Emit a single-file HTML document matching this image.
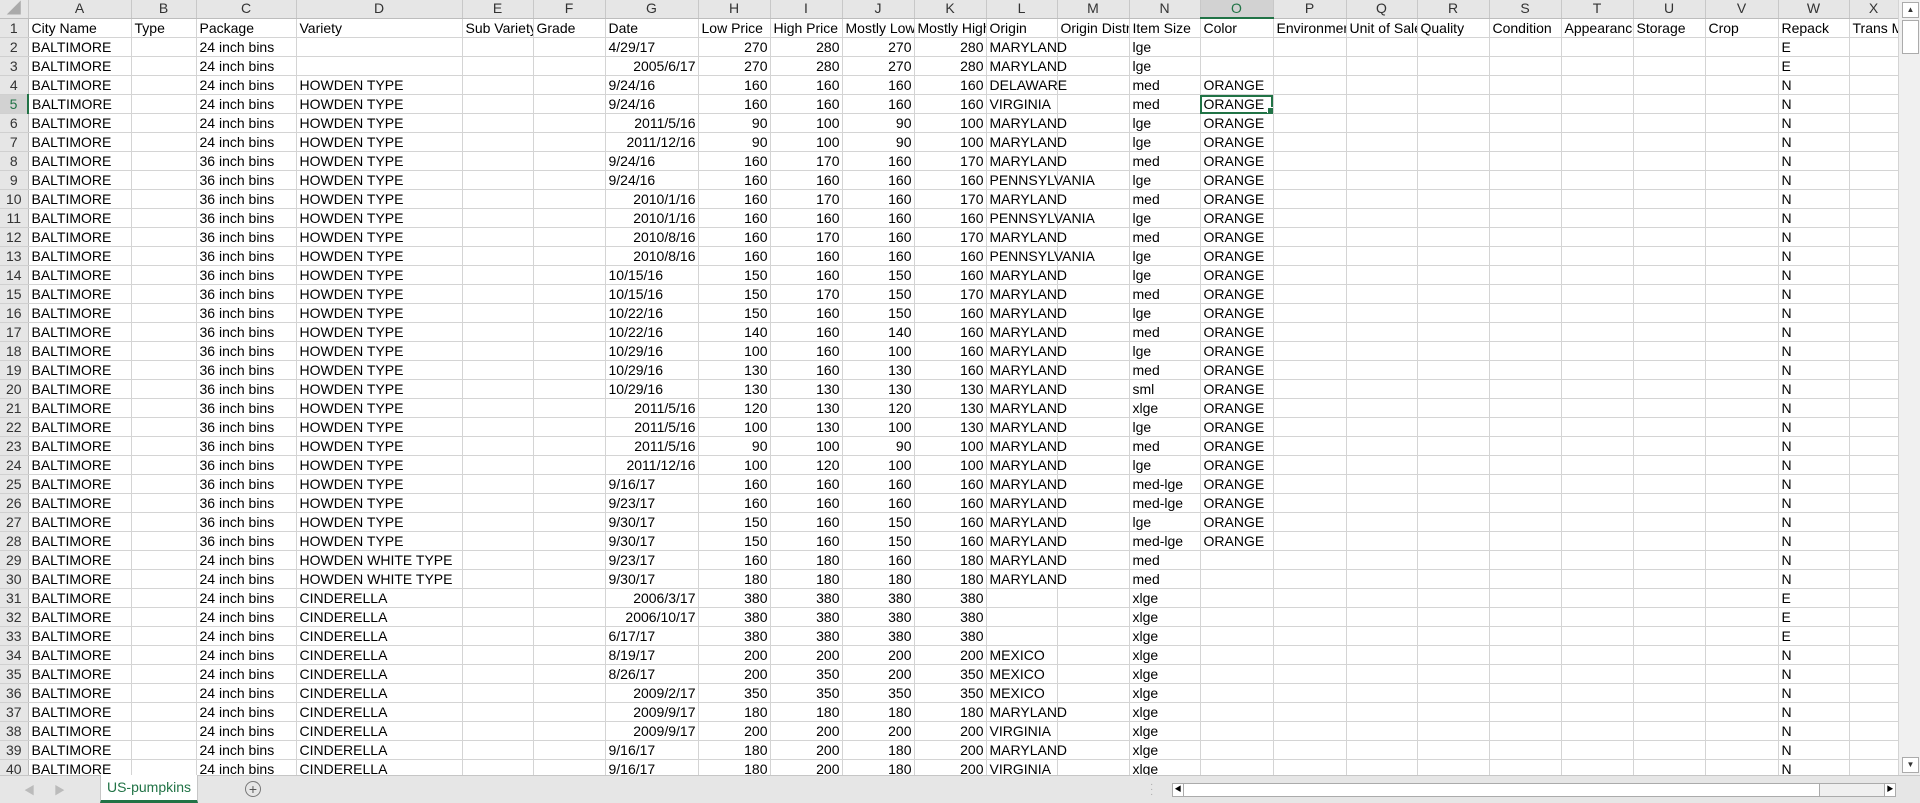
<!DOCTYPE html>
<html><head><meta charset="utf-8">
<style>
html,body{margin:0;padding:0;width:1920px;height:803px;overflow:hidden;background:#fff;font-family:"Liberation Sans","Noto Sans CJK SC",sans-serif;}
#grid{position:absolute;left:0;top:0;width:1898px;height:775px;overflow:hidden;}
table{border-collapse:collapse;table-layout:fixed;width:1898px;font-size:14px;}
td,th{height:18px;padding:0 2px 0 3px;white-space:nowrap;overflow:hidden;border-right:1px solid #d4d4d4;border-bottom:1px solid #d4d4d4;line-height:18px;color:#000;font-weight:normal;text-align:left;}
tbody td:nth-child(13){overflow:visible;}
thead th{background:#e6e6e6;color:#333;text-align:center;height:17px;line-height:17px;border-right:1px solid #c8c8c8;border-bottom:1px solid #bdbdbd;font-size:14px;padding:0}
tbody th{background:#e6e6e6;color:#333;text-align:center;padding:0;border-right:1px solid #bdbdbd;border-bottom:1px solid #d0d0d0;}
td.r{text-align:right;}
thead th.sel{background:#d2d2d2;color:#217346;border-bottom:2px solid #217346}
tbody th.sel{background:#d2d2d2;color:#217346;border-right:2px solid #217346}
td.cur{outline:2px solid #217346;outline-offset:-2px;position:relative}
td.cur:after{content:"";position:absolute;right:-1px;bottom:-1px;width:5px;height:5px;background:#217346;border:1px solid #fff}
#vs{position:absolute;left:1898px;top:0;width:22px;height:775px;background:#f0f0f0;border-left:1px solid #d4d4d4;box-sizing:border-box}
#bar{position:absolute;left:0;top:775px;width:1920px;height:28px;background:#e6e6e6;border-top:1px solid #c6c6c6;box-sizing:border-box}
</style></head><body>
<div id="grid"><table>
<colgroup><col style="width:28px"><col style="width:103px"><col style="width:65px"><col style="width:100px"><col style="width:166px"><col style="width:71px"><col style="width:72px"><col style="width:93px"><col style="width:72px"><col style="width:72px"><col style="width:72px"><col style="width:72px"><col style="width:71px"><col style="width:72px"><col style="width:71px"><col style="width:73px"><col style="width:73px"><col style="width:71px"><col style="width:72px"><col style="width:72px"><col style="width:72px"><col style="width:72px"><col style="width:73px"><col style="width:71px"><col style="width:49px"></colgroup>
<thead><tr><th style="color:#aaa">◢</th><th>A</th><th>B</th><th>C</th><th>D</th><th>E</th><th>F</th><th>G</th><th>H</th><th>I</th><th>J</th><th>K</th><th>L</th><th>M</th><th>N</th><th class="sel">O</th><th>P</th><th>Q</th><th>R</th><th>S</th><th>T</th><th>U</th><th>V</th><th>W</th><th>X</th></tr></thead>
<tbody>
<tr><th>1</th><td>City Name</td><td>Type</td><td>Package</td><td>Variety</td><td>Sub Variety</td><td>Grade</td><td>Date</td><td>Low Price</td><td>High Price</td><td>Mostly Low</td><td>Mostly High</td><td>Origin</td><td>Origin District</td><td>Item Size</td><td>Color</td><td>Environment</td><td>Unit of Sale</td><td>Quality</td><td>Condition</td><td>Appearance</td><td>Storage</td><td>Crop</td><td>Repack</td><td>Trans Mode</td></tr>
<tr><th>2</th><td>BALTIMORE</td><td></td><td>24 inch bins</td><td></td><td></td><td></td><td>4/29/17</td><td class="r">270</td><td class="r">280</td><td class="r">270</td><td class="r">280</td><td>MARYLAND</td><td></td><td>lge</td><td></td><td></td><td></td><td></td><td></td><td></td><td></td><td></td><td>E</td><td></td></tr>
<tr><th>3</th><td>BALTIMORE</td><td></td><td>24 inch bins</td><td></td><td></td><td></td><td class="r">2005/6/17</td><td class="r">270</td><td class="r">280</td><td class="r">270</td><td class="r">280</td><td>MARYLAND</td><td></td><td>lge</td><td></td><td></td><td></td><td></td><td></td><td></td><td></td><td></td><td>E</td><td></td></tr>
<tr><th>4</th><td>BALTIMORE</td><td></td><td>24 inch bins</td><td>HOWDEN TYPE</td><td></td><td></td><td>9/24/16</td><td class="r">160</td><td class="r">160</td><td class="r">160</td><td class="r">160</td><td>DELAWARE</td><td></td><td>med</td><td>ORANGE</td><td></td><td></td><td></td><td></td><td></td><td></td><td></td><td>N</td><td></td></tr>
<tr><th class="sel">5</th><td>BALTIMORE</td><td></td><td>24 inch bins</td><td>HOWDEN TYPE</td><td></td><td></td><td>9/24/16</td><td class="r">160</td><td class="r">160</td><td class="r">160</td><td class="r">160</td><td>VIRGINIA</td><td></td><td>med</td><td class="cur">ORANGE</td><td></td><td></td><td></td><td></td><td></td><td></td><td></td><td>N</td><td></td></tr>
<tr><th>6</th><td>BALTIMORE</td><td></td><td>24 inch bins</td><td>HOWDEN TYPE</td><td></td><td></td><td class="r">2011/5/16</td><td class="r">90</td><td class="r">100</td><td class="r">90</td><td class="r">100</td><td>MARYLAND</td><td></td><td>lge</td><td>ORANGE</td><td></td><td></td><td></td><td></td><td></td><td></td><td></td><td>N</td><td></td></tr>
<tr><th>7</th><td>BALTIMORE</td><td></td><td>24 inch bins</td><td>HOWDEN TYPE</td><td></td><td></td><td class="r">2011/12/16</td><td class="r">90</td><td class="r">100</td><td class="r">90</td><td class="r">100</td><td>MARYLAND</td><td></td><td>lge</td><td>ORANGE</td><td></td><td></td><td></td><td></td><td></td><td></td><td></td><td>N</td><td></td></tr>
<tr><th>8</th><td>BALTIMORE</td><td></td><td>36 inch bins</td><td>HOWDEN TYPE</td><td></td><td></td><td>9/24/16</td><td class="r">160</td><td class="r">170</td><td class="r">160</td><td class="r">170</td><td>MARYLAND</td><td></td><td>med</td><td>ORANGE</td><td></td><td></td><td></td><td></td><td></td><td></td><td></td><td>N</td><td></td></tr>
<tr><th>9</th><td>BALTIMORE</td><td></td><td>36 inch bins</td><td>HOWDEN TYPE</td><td></td><td></td><td>9/24/16</td><td class="r">160</td><td class="r">160</td><td class="r">160</td><td class="r">160</td><td>PENNSYLVANIA</td><td></td><td>lge</td><td>ORANGE</td><td></td><td></td><td></td><td></td><td></td><td></td><td></td><td>N</td><td></td></tr>
<tr><th>10</th><td>BALTIMORE</td><td></td><td>36 inch bins</td><td>HOWDEN TYPE</td><td></td><td></td><td class="r">2010/1/16</td><td class="r">160</td><td class="r">170</td><td class="r">160</td><td class="r">170</td><td>MARYLAND</td><td></td><td>med</td><td>ORANGE</td><td></td><td></td><td></td><td></td><td></td><td></td><td></td><td>N</td><td></td></tr>
<tr><th>11</th><td>BALTIMORE</td><td></td><td>36 inch bins</td><td>HOWDEN TYPE</td><td></td><td></td><td class="r">2010/1/16</td><td class="r">160</td><td class="r">160</td><td class="r">160</td><td class="r">160</td><td>PENNSYLVANIA</td><td></td><td>lge</td><td>ORANGE</td><td></td><td></td><td></td><td></td><td></td><td></td><td></td><td>N</td><td></td></tr>
<tr><th>12</th><td>BALTIMORE</td><td></td><td>36 inch bins</td><td>HOWDEN TYPE</td><td></td><td></td><td class="r">2010/8/16</td><td class="r">160</td><td class="r">170</td><td class="r">160</td><td class="r">170</td><td>MARYLAND</td><td></td><td>med</td><td>ORANGE</td><td></td><td></td><td></td><td></td><td></td><td></td><td></td><td>N</td><td></td></tr>
<tr><th>13</th><td>BALTIMORE</td><td></td><td>36 inch bins</td><td>HOWDEN TYPE</td><td></td><td></td><td class="r">2010/8/16</td><td class="r">160</td><td class="r">160</td><td class="r">160</td><td class="r">160</td><td>PENNSYLVANIA</td><td></td><td>lge</td><td>ORANGE</td><td></td><td></td><td></td><td></td><td></td><td></td><td></td><td>N</td><td></td></tr>
<tr><th>14</th><td>BALTIMORE</td><td></td><td>36 inch bins</td><td>HOWDEN TYPE</td><td></td><td></td><td>10/15/16</td><td class="r">150</td><td class="r">160</td><td class="r">150</td><td class="r">160</td><td>MARYLAND</td><td></td><td>lge</td><td>ORANGE</td><td></td><td></td><td></td><td></td><td></td><td></td><td></td><td>N</td><td></td></tr>
<tr><th>15</th><td>BALTIMORE</td><td></td><td>36 inch bins</td><td>HOWDEN TYPE</td><td></td><td></td><td>10/15/16</td><td class="r">150</td><td class="r">170</td><td class="r">150</td><td class="r">170</td><td>MARYLAND</td><td></td><td>med</td><td>ORANGE</td><td></td><td></td><td></td><td></td><td></td><td></td><td></td><td>N</td><td></td></tr>
<tr><th>16</th><td>BALTIMORE</td><td></td><td>36 inch bins</td><td>HOWDEN TYPE</td><td></td><td></td><td>10/22/16</td><td class="r">150</td><td class="r">160</td><td class="r">150</td><td class="r">160</td><td>MARYLAND</td><td></td><td>lge</td><td>ORANGE</td><td></td><td></td><td></td><td></td><td></td><td></td><td></td><td>N</td><td></td></tr>
<tr><th>17</th><td>BALTIMORE</td><td></td><td>36 inch bins</td><td>HOWDEN TYPE</td><td></td><td></td><td>10/22/16</td><td class="r">140</td><td class="r">160</td><td class="r">140</td><td class="r">160</td><td>MARYLAND</td><td></td><td>med</td><td>ORANGE</td><td></td><td></td><td></td><td></td><td></td><td></td><td></td><td>N</td><td></td></tr>
<tr><th>18</th><td>BALTIMORE</td><td></td><td>36 inch bins</td><td>HOWDEN TYPE</td><td></td><td></td><td>10/29/16</td><td class="r">100</td><td class="r">160</td><td class="r">100</td><td class="r">160</td><td>MARYLAND</td><td></td><td>lge</td><td>ORANGE</td><td></td><td></td><td></td><td></td><td></td><td></td><td></td><td>N</td><td></td></tr>
<tr><th>19</th><td>BALTIMORE</td><td></td><td>36 inch bins</td><td>HOWDEN TYPE</td><td></td><td></td><td>10/29/16</td><td class="r">130</td><td class="r">160</td><td class="r">130</td><td class="r">160</td><td>MARYLAND</td><td></td><td>med</td><td>ORANGE</td><td></td><td></td><td></td><td></td><td></td><td></td><td></td><td>N</td><td></td></tr>
<tr><th>20</th><td>BALTIMORE</td><td></td><td>36 inch bins</td><td>HOWDEN TYPE</td><td></td><td></td><td>10/29/16</td><td class="r">130</td><td class="r">130</td><td class="r">130</td><td class="r">130</td><td>MARYLAND</td><td></td><td>sml</td><td>ORANGE</td><td></td><td></td><td></td><td></td><td></td><td></td><td></td><td>N</td><td></td></tr>
<tr><th>21</th><td>BALTIMORE</td><td></td><td>36 inch bins</td><td>HOWDEN TYPE</td><td></td><td></td><td class="r">2011/5/16</td><td class="r">120</td><td class="r">130</td><td class="r">120</td><td class="r">130</td><td>MARYLAND</td><td></td><td>xlge</td><td>ORANGE</td><td></td><td></td><td></td><td></td><td></td><td></td><td></td><td>N</td><td></td></tr>
<tr><th>22</th><td>BALTIMORE</td><td></td><td>36 inch bins</td><td>HOWDEN TYPE</td><td></td><td></td><td class="r">2011/5/16</td><td class="r">100</td><td class="r">130</td><td class="r">100</td><td class="r">130</td><td>MARYLAND</td><td></td><td>lge</td><td>ORANGE</td><td></td><td></td><td></td><td></td><td></td><td></td><td></td><td>N</td><td></td></tr>
<tr><th>23</th><td>BALTIMORE</td><td></td><td>36 inch bins</td><td>HOWDEN TYPE</td><td></td><td></td><td class="r">2011/5/16</td><td class="r">90</td><td class="r">100</td><td class="r">90</td><td class="r">100</td><td>MARYLAND</td><td></td><td>med</td><td>ORANGE</td><td></td><td></td><td></td><td></td><td></td><td></td><td></td><td>N</td><td></td></tr>
<tr><th>24</th><td>BALTIMORE</td><td></td><td>36 inch bins</td><td>HOWDEN TYPE</td><td></td><td></td><td class="r">2011/12/16</td><td class="r">100</td><td class="r">120</td><td class="r">100</td><td class="r">100</td><td>MARYLAND</td><td></td><td>lge</td><td>ORANGE</td><td></td><td></td><td></td><td></td><td></td><td></td><td></td><td>N</td><td></td></tr>
<tr><th>25</th><td>BALTIMORE</td><td></td><td>36 inch bins</td><td>HOWDEN TYPE</td><td></td><td></td><td>9/16/17</td><td class="r">160</td><td class="r">160</td><td class="r">160</td><td class="r">160</td><td>MARYLAND</td><td></td><td>med-lge</td><td>ORANGE</td><td></td><td></td><td></td><td></td><td></td><td></td><td></td><td>N</td><td></td></tr>
<tr><th>26</th><td>BALTIMORE</td><td></td><td>36 inch bins</td><td>HOWDEN TYPE</td><td></td><td></td><td>9/23/17</td><td class="r">160</td><td class="r">160</td><td class="r">160</td><td class="r">160</td><td>MARYLAND</td><td></td><td>med-lge</td><td>ORANGE</td><td></td><td></td><td></td><td></td><td></td><td></td><td></td><td>N</td><td></td></tr>
<tr><th>27</th><td>BALTIMORE</td><td></td><td>36 inch bins</td><td>HOWDEN TYPE</td><td></td><td></td><td>9/30/17</td><td class="r">150</td><td class="r">160</td><td class="r">150</td><td class="r">160</td><td>MARYLAND</td><td></td><td>lge</td><td>ORANGE</td><td></td><td></td><td></td><td></td><td></td><td></td><td></td><td>N</td><td></td></tr>
<tr><th>28</th><td>BALTIMORE</td><td></td><td>36 inch bins</td><td>HOWDEN TYPE</td><td></td><td></td><td>9/30/17</td><td class="r">150</td><td class="r">160</td><td class="r">150</td><td class="r">160</td><td>MARYLAND</td><td></td><td>med-lge</td><td>ORANGE</td><td></td><td></td><td></td><td></td><td></td><td></td><td></td><td>N</td><td></td></tr>
<tr><th>29</th><td>BALTIMORE</td><td></td><td>24 inch bins</td><td>HOWDEN WHITE TYPE</td><td></td><td></td><td>9/23/17</td><td class="r">160</td><td class="r">180</td><td class="r">160</td><td class="r">180</td><td>MARYLAND</td><td></td><td>med</td><td></td><td></td><td></td><td></td><td></td><td></td><td></td><td></td><td>N</td><td></td></tr>
<tr><th>30</th><td>BALTIMORE</td><td></td><td>24 inch bins</td><td>HOWDEN WHITE TYPE</td><td></td><td></td><td>9/30/17</td><td class="r">180</td><td class="r">180</td><td class="r">180</td><td class="r">180</td><td>MARYLAND</td><td></td><td>med</td><td></td><td></td><td></td><td></td><td></td><td></td><td></td><td></td><td>N</td><td></td></tr>
<tr><th>31</th><td>BALTIMORE</td><td></td><td>24 inch bins</td><td>CINDERELLA</td><td></td><td></td><td class="r">2006/3/17</td><td class="r">380</td><td class="r">380</td><td class="r">380</td><td class="r">380</td><td></td><td></td><td>xlge</td><td></td><td></td><td></td><td></td><td></td><td></td><td></td><td></td><td>E</td><td></td></tr>
<tr><th>32</th><td>BALTIMORE</td><td></td><td>24 inch bins</td><td>CINDERELLA</td><td></td><td></td><td class="r">2006/10/17</td><td class="r">380</td><td class="r">380</td><td class="r">380</td><td class="r">380</td><td></td><td></td><td>xlge</td><td></td><td></td><td></td><td></td><td></td><td></td><td></td><td></td><td>E</td><td></td></tr>
<tr><th>33</th><td>BALTIMORE</td><td></td><td>24 inch bins</td><td>CINDERELLA</td><td></td><td></td><td>6/17/17</td><td class="r">380</td><td class="r">380</td><td class="r">380</td><td class="r">380</td><td></td><td></td><td>xlge</td><td></td><td></td><td></td><td></td><td></td><td></td><td></td><td></td><td>E</td><td></td></tr>
<tr><th>34</th><td>BALTIMORE</td><td></td><td>24 inch bins</td><td>CINDERELLA</td><td></td><td></td><td>8/19/17</td><td class="r">200</td><td class="r">200</td><td class="r">200</td><td class="r">200</td><td>MEXICO</td><td></td><td>xlge</td><td></td><td></td><td></td><td></td><td></td><td></td><td></td><td></td><td>N</td><td></td></tr>
<tr><th>35</th><td>BALTIMORE</td><td></td><td>24 inch bins</td><td>CINDERELLA</td><td></td><td></td><td>8/26/17</td><td class="r">200</td><td class="r">350</td><td class="r">200</td><td class="r">350</td><td>MEXICO</td><td></td><td>xlge</td><td></td><td></td><td></td><td></td><td></td><td></td><td></td><td></td><td>N</td><td></td></tr>
<tr><th>36</th><td>BALTIMORE</td><td></td><td>24 inch bins</td><td>CINDERELLA</td><td></td><td></td><td class="r">2009/2/17</td><td class="r">350</td><td class="r">350</td><td class="r">350</td><td class="r">350</td><td>MEXICO</td><td></td><td>xlge</td><td></td><td></td><td></td><td></td><td></td><td></td><td></td><td></td><td>N</td><td></td></tr>
<tr><th>37</th><td>BALTIMORE</td><td></td><td>24 inch bins</td><td>CINDERELLA</td><td></td><td></td><td class="r">2009/9/17</td><td class="r">180</td><td class="r">180</td><td class="r">180</td><td class="r">180</td><td>MARYLAND</td><td></td><td>xlge</td><td></td><td></td><td></td><td></td><td></td><td></td><td></td><td></td><td>N</td><td></td></tr>
<tr><th>38</th><td>BALTIMORE</td><td></td><td>24 inch bins</td><td>CINDERELLA</td><td></td><td></td><td class="r">2009/9/17</td><td class="r">200</td><td class="r">200</td><td class="r">200</td><td class="r">200</td><td>VIRGINIA</td><td></td><td>xlge</td><td></td><td></td><td></td><td></td><td></td><td></td><td></td><td></td><td>N</td><td></td></tr>
<tr><th>39</th><td>BALTIMORE</td><td></td><td>24 inch bins</td><td>CINDERELLA</td><td></td><td></td><td>9/16/17</td><td class="r">180</td><td class="r">200</td><td class="r">180</td><td class="r">200</td><td>MARYLAND</td><td></td><td>xlge</td><td></td><td></td><td></td><td></td><td></td><td></td><td></td><td></td><td>N</td><td></td></tr>
<tr><th>40</th><td>BALTIMORE</td><td></td><td>24 inch bins</td><td>CINDERELLA</td><td></td><td></td><td>9/16/17</td><td class="r">180</td><td class="r">200</td><td class="r">180</td><td class="r">200</td><td>VIRGINIA</td><td></td><td>xlge</td><td></td><td></td><td></td><td></td><td></td><td></td><td></td><td></td><td>N</td><td></td></tr>
</tbody></table></div>
<div id="vs">
 <div style="position:absolute;left:3px;top:2px;width:15px;height:14px;background:#fff;border:1px solid #ababab;font-size:8px;text-align:center;line-height:14px;color:#333">▲</div>
 <div style="position:absolute;left:3px;top:20px;width:15px;height:32px;background:#fff;border:1px solid #ababab"></div>
 <div style="position:absolute;left:3px;top:757px;width:15px;height:14px;background:#fff;border:1px solid #ababab;font-size:8px;text-align:center;line-height:14px;color:#333">▼</div>
</div>
<div id="bar">
 <div style="position:absolute;left:24px;top:6px;color:#bbb;font-size:11px">◀</div>
 <div style="position:absolute;left:54px;top:6px;color:#bbb;font-size:11px">▶</div>
 <div style="position:absolute;left:100px;top:-1px;width:96px;height:25px;background:#fff;border-left:1px solid #c6c6c6;border-right:1px solid #c6c6c6;border-bottom:3px solid #217346;color:#217346;font-size:14px;text-align:center;line-height:24px">US-pumpkins</div>
 <div style="position:absolute;left:245px;top:5px;width:14px;height:14px;border:1px solid #777;border-radius:50%;color:#555;font-size:14px;line-height:14px;text-align:center">+</div>
 <div style="position:absolute;left:1150px;top:6px;color:#aaa;font-size:10px;line-height:5px">·<br>·<br>·</div>
 <div style="position:absolute;left:1172px;top:7px;width:724px;height:14px;background:#f0f0f0;border:1px solid #ababab;box-sizing:border-box">
  <div style="position:absolute;left:0;top:0;width:10px;height:12px;background:#fff;border-right:1px solid #ababab;font-size:7px;line-height:12px;text-align:center">◀</div>
  <div style="position:absolute;left:11px;top:0;width:635px;height:12px;background:#fff;border-right:1px solid #ababab"></div>
  <div style="position:absolute;right:0;top:0;width:10px;height:12px;background:#fff;border-left:1px solid #ababab;font-size:7px;line-height:12px;text-align:center">▶</div>
 </div>
</div>
</body></html>
